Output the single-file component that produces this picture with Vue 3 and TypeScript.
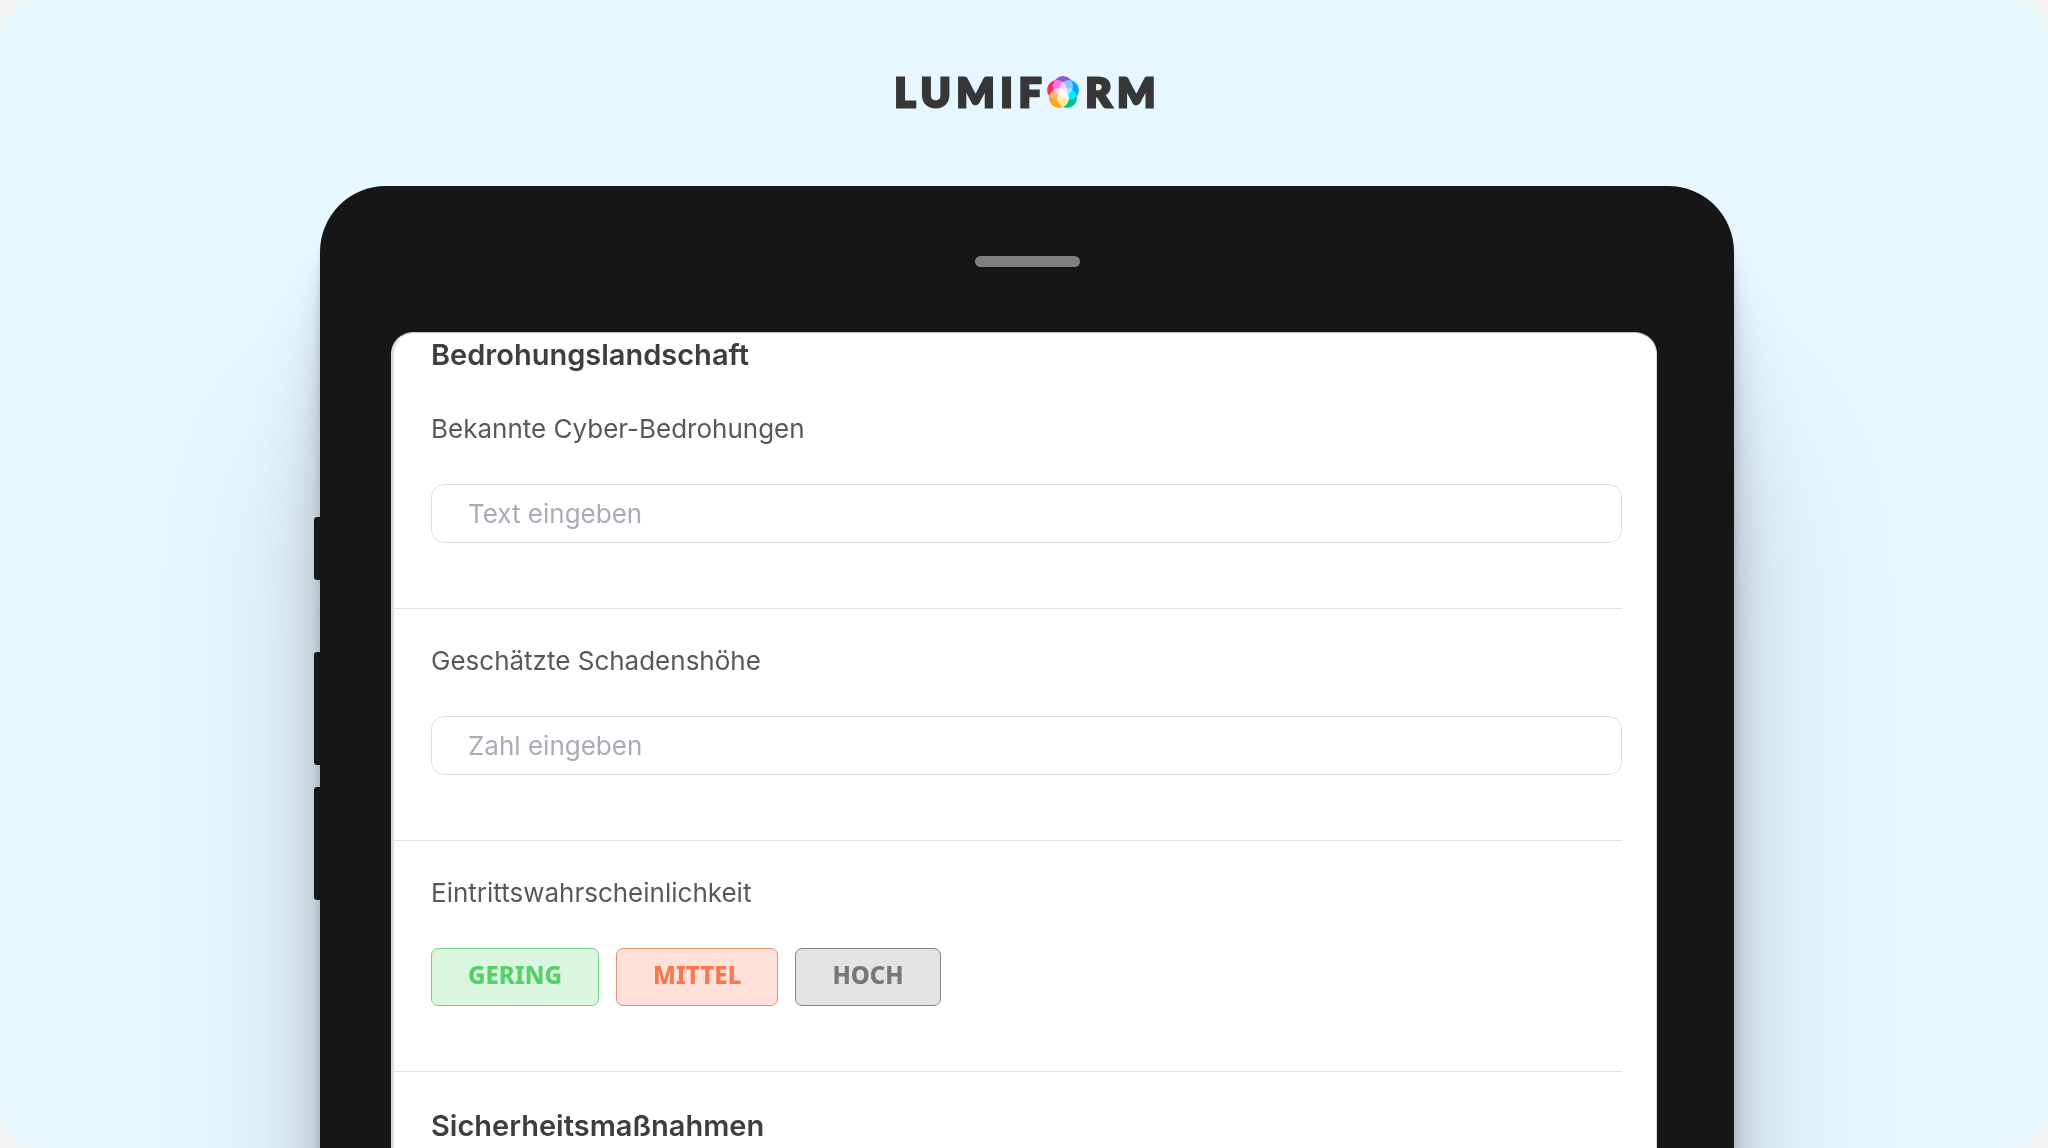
<script setup lang="ts">
import { ref } from 'vue'

interface Level {
  id: string
  label: string
}

const levels: Level[] = [
  { id: 'low', label: 'GERING' },
  { id: 'medium', label: 'MITTEL' },
  { id: 'high', label: 'HOCH' },
]

const threats = ref('')
const damage = ref('')
</script>

<template>
  <main class="stage">
    <header class="brand" aria-label="Lumiform">
      <span class="word">LUMIF</span>
      <svg class="bloom" viewBox="0 0 32 34" aria-hidden="true">
        <g class="petals">
          <circle cx="16" cy="11" r="10" fill="#8b5ad6" />
          <circle cx="22" cy="15" r="10" fill="#00a8ff" />
          <circle cx="20" cy="23" r="10" fill="#00c48c" />
          <circle cx="12" cy="23" r="10" fill="#ffa51f" />
          <circle cx="10" cy="15" r="10" fill="#ff2d5c" />
        </g>
      </svg>
      <span class="word">RM</span>
    </header>

    <div class="tablet">
      <i class="key key-short"></i>
      <i class="key key-up"></i>
      <i class="key key-down"></i>
      <div class="speaker"></div>

      <form class="screen" @submit.prevent>
        <h2>Bedrohungslandschaft</h2>

        <section class="field">
          <label for="threats">Bekannte Cyber-Bedrohungen</label>
          <input id="threats" v-model="threats" type="text" placeholder="Text eingeben" />
        </section>

        <section class="field">
          <label for="damage">Geschätzte Schadenshöhe</label>
          <input id="damage" v-model="damage" type="text" inputmode="numeric" placeholder="Zahl eingeben" />
        </section>

        <section class="field" role="group" aria-labelledby="likelihood">
          <span id="likelihood" class="caption">Eintrittswahrscheinlichkeit</span>
          <div class="choices">
            <button v-for="level in levels" :key="level.id" type="button" :class="level.id">
              {{ level.label }}
            </button>
          </div>
        </section>

        <h2>Sicherheitsmaßnahmen</h2>
      </form>
    </div>
  </main>
</template>

<style>
body {
  margin: 0;
  background: #f4f4f4;
}
</style>

<style scoped>
.stage {
  height: 100vh;
  overflow: hidden;
  display: flex;
  flex-direction: column;
  border-radius: 40px;
  background: #e6f7ff;
  font-family: Inter, "Noto Sans", sans-serif;
  color: #3c3e42;
}

.brand {
  flex: none;
  display: flex;
  justify-content: center;
  align-items: center;
  box-sizing: border-box;
  height: 186px;
  padding: 0 0 2px 8px;
  color: #373737;
}

.word {
  font: 900 40px/48px Lato, sans-serif;
  letter-spacing: 6px;
  -webkit-text-stroke: 3px #373737;
  stroke-linejoin: round;
}

.bloom {
  width: 32px;
  height: 34px;
  margin-right: 6px;
}

.petals {
  isolation: isolate;
}

.petals circle {
  mix-blend-mode: screen;
}

.tablet {
  position: relative;
  flex: 1 0 auto;
  display: flex;
  flex-direction: column;
  margin: 0 314px 0 320px;
  padding: 0 77px 0 71px;
  border-radius: 66px 66px 0 0;
  background: #161616;
  box-shadow:
    0 12px 6px rgba(0, 0, 0, 0.05),
    0 24px 12px rgba(0, 0, 0, 0.06),
    0 40px 22px rgba(0, 0, 0, 0.07),
    0 66px 40px rgba(0, 0, 0, 0.08),
    0 120px 74px rgba(0, 0, 0, 0.1),
    0 250px 166px rgba(0, 0, 0, 0.15);
}

.speaker {
  align-self: center;
  width: 105px;
  height: 11px;
  margin: 70px 0 65px 6px;
  border-radius: 6px;
  background: #7f7f7f;
}

.key {
  position: absolute;
  left: -6px;
  width: 10px;
  height: 113px;
  border-radius: 3px;
  background: #161616;
}

.key-short {
  top: 331px;
  height: 63px;
}

.key-up {
  top: 466px;
}

.key-down {
  top: 601px;
}

.screen {
  flex: 1;
  padding: 4px 34px 0 0;
  border-top: 1px solid #c4c4c4;
  border-left: 3px solid #dcdcdc;
  border-right: 1px solid #dcdcdc;
  border-radius: 22px 22px 0 0;
  background: #fff;
}

h2 {
  margin: 0 0 40px 37px;
  font-size: 29px;
  line-height: 36px;
  font-weight: 600;
}

.field {
  display: flex;
  flex-direction: column;
  gap: 39px;
  margin-bottom: 36px;
  padding: 0 0 65px 37px;
  border-bottom: 1px solid #e2e2e2;
}

label,
.caption {
  font-size: 26px;
  line-height: 32px;
  font-weight: 400;
  color: #56595c;
}

input {
  box-sizing: border-box;
  width: 100%;
  height: 59px;
  padding: 0 36px;
  border: 1px solid #dedede;
  border-radius: 13px;
  background: #fff;
  font: 400 26px/32px Inter, "Noto Sans", sans-serif;
  color: #3c3e42;
}

input::placeholder {
  color: #a9acb8;
  opacity: 1;
}

.choices {
  display: flex;
  gap: 17px;
}

button {
  height: 58px;
  padding: 0 36px 4px;
  border: 1px solid;
  border-radius: 7px;
  font: 800 24px/32px "Noto Sans", sans-serif;
}

.low {
  border-color: #75cf85;
  background: #daf6df;
  color: #54d169;
}

.medium {
  border-color: #e58e74;
  background: #ffe1d9;
  color: #fb7550;
}

.high {
  border-color: #858585;
  background: #e3e3e3;
  color: #777;
}
</style>
